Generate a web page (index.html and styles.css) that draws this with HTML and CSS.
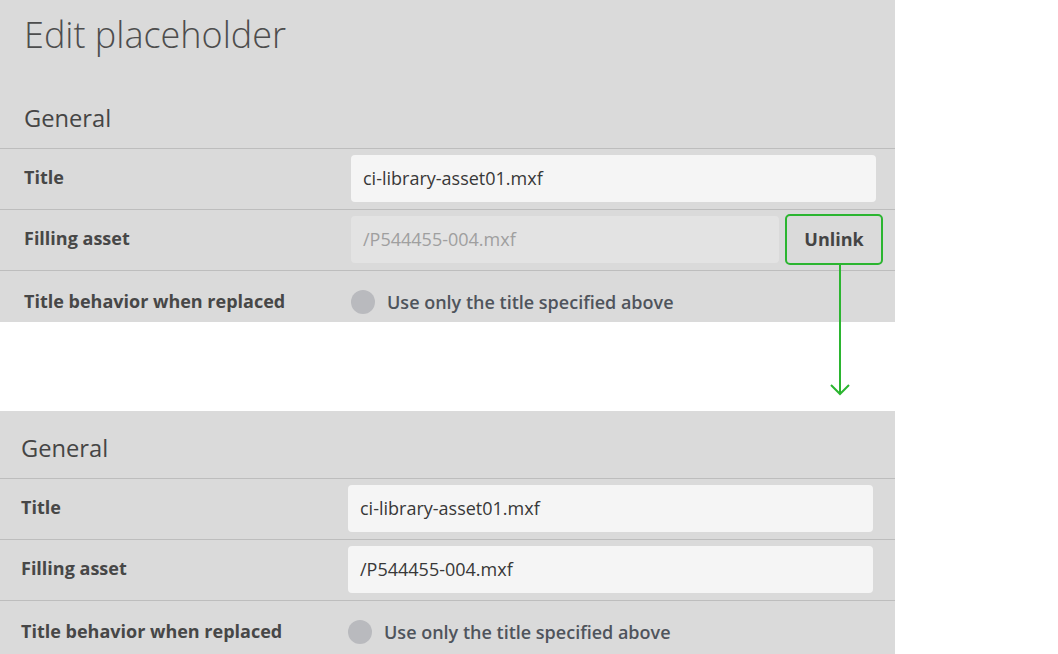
FILE: index.html
```html
<!DOCTYPE html>
<html lang="en">
<head>
<meta charset="utf-8">
<title>Edit placeholder</title>
<link rel="stylesheet" href="styles.css">
</head>
<body>
<div class="page">
  <section class="panel panel-top">
    <h1 class="page-title">Edit placeholder</h1>
    <h2 class="section-title">General</h2>
    <div class="row">
      <div class="label">Title</div>
      <div class="value"><div class="input">ci-library-asset01.mxf</div></div>
    </div>
    <div class="row">
      <div class="label">Filling asset</div>
      <div class="value">
        <div class="input input-disabled">/P544455-004.mxf</div>
        <button class="unlink">Unlink</button>
      </div>
    </div>
    <div class="row row-radio">
      <div class="label">Title behavior when replaced</div>
      <div class="value"><span class="radio"></span><span class="option">Use only the title specified above</span></div>
    </div>
  </section>

  <div class="spacer"></div>

  <section class="panel panel-bottom">
    <h2 class="section-title">General</h2>
    <div class="row">
      <div class="label">Title</div>
      <div class="value"><div class="input">ci-library-asset01.mxf</div></div>
    </div>
    <div class="row">
      <div class="label">Filling asset</div>
      <div class="value"><div class="input">/P544455-004.mxf</div></div>
    </div>
    <div class="row row-radio">
      <div class="label">Title behavior when replaced</div>
      <div class="value"><span class="radio"></span><span class="option">Use only the title specified above</span></div>
    </div>
  </section>

  <svg class="arrow" width="20" height="132" viewBox="0 0 20 132" aria-hidden="true">
    <line x1="10" y1="0" x2="10" y2="129" stroke="#2bb530" stroke-width="2"/>
    <polyline points="1,120 10,129 19,120" fill="none" stroke="#2bb530" stroke-width="2" stroke-linejoin="miter"/>
  </svg>
</div>
</body>
</html>
```

FILE: styles.css
```css
* { box-sizing: border-box; }

html, body {
  margin: 0;
  padding: 0;
  background: #ffffff;
}

body {
  font-family: "Open Sans", "Liberation Sans", sans-serif;
  color: #444444;
  width: 1058px;
  height: 654px;
  overflow: hidden;
}

.page {
  position: relative;
  width: 1058px;
}

.panel {
  width: 895px;
  background: #dadada;
  overflow: hidden;
}

.panel-top {
  height: 322px;
  padding-top: 14px;
  --pad-left: 24px;
}

.panel-bottom {
  height: 243px;
  padding-top: 22px;
  --pad-left: 21px;
}

.spacer {
  height: 89px;
}

.page-title {
  margin: 0;
  padding-left: 24px;
  font-size: 36px;
  line-height: 41px;
  font-weight: 300;
  color: #4d4d4d;
}

.section-title {
  margin: 0;
  padding-left: var(--pad-left);
  font-size: 23.7px;
  line-height: 30px;
  font-weight: 400;
  color: #454545;
  padding-bottom: 15px;
}

.panel-top .section-title {
  padding-top: 48px;
}

.row {
  display: flex;
  align-items: center;
  height: 61px;
  border-top: 1px solid #bdbdbd;
  padding-left: var(--pad-left);
  padding-bottom: 2px;
}

.row-radio {
  padding-top: 1px;
  padding-bottom: 0;
}

.label {
  width: 327px;
  flex-shrink: 0;
  font-size: 18px;
  font-weight: 700;
  color: #474747;
  padding-bottom: 2px;
}

.value {
  display: flex;
  align-items: center;
  gap: 6px;
  width: 525px;
}

.input {
  flex: 1 1 auto;
  height: 47px;
  display: flex;
  align-items: center;
  padding-left: 12px;
  background: #f5f5f5;
  border-radius: 4px;
  font-size: 18px;
  color: #383838;
}

.input-disabled {
  flex: 0 0 428px;
  background: #e3e3e3;
  color: #9f9f9f;
}

.unlink {
  flex: 0 0 98px;
  height: 51px;
  margin-right: -7px;
  background: #dadada;
  border: 2px solid #2bb530;
  border-radius: 5px;
  font-family: "Open Sans", "Liberation Sans", sans-serif;
  font-size: 18px;
  font-weight: 700;
  color: #444444;
  padding: 0;
}

.radio {
  width: 24px;
  height: 24px;
  border-radius: 50%;
  background: #b9babe;
  flex-shrink: 0;
  margin-right: 6px;
}

.option {
  font-size: 18px;
  font-weight: 600;
  color: #4f545c;
}

.arrow {
  position: absolute;
  left: 830px;
  top: 265px;
}
```
